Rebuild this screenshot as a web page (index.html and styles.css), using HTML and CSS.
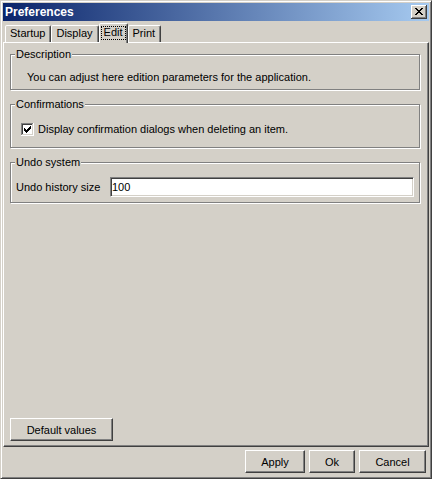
FILE: index.html
```html
<!DOCTYPE html>
<html>
<head>
<meta charset="utf-8">
<title>Preferences</title>
<link rel="stylesheet" href="styles.css">
</head>
<body>
<div class="window">
  <div class="titlebar">
    <span class="title">Preferences</span>
    <svg class="close" width="16" height="14" viewBox="0 0 16 14" shape-rendering="crispEdges">
      <rect x="0" y="0" width="16" height="14" fill="#d4d0c8"/>
      <rect x="0" y="0" width="15" height="1" fill="#ffffff"/>
      <rect x="0" y="0" width="1" height="13" fill="#ffffff"/>
      <rect x="1" y="12" width="14" height="1" fill="#808080"/>
      <rect x="14" y="1" width="1" height="12" fill="#808080"/>
      <rect x="0" y="13" width="16" height="1" fill="#404040"/>
      <rect x="15" y="0" width="1" height="14" fill="#404040"/>
      <path fill="#000" d="M4 3h2v1h-2z M10 3h2v1h-2z M5 4h2v1h-2z M9 4h2v1h-2z M6 5h4v1h-4z M7 6h2v1h-2z M6 7h4v1h-4z M5 8h2v1h-2z M9 8h2v1h-2z M4 9h2v1h-2z M10 9h2v1h-2z"/>
    </svg>
  </div>
  <div class="tabs">
    <div class="tab">Startup</div>
    <div class="tab">Display</div>
    <div class="tab tab-active"><span class="focus">Edit</span></div>
    <div class="tab">Print</div>
  </div>
  <div class="panel">
    <div class="group">
      <div class="group-title">Description</div>
      <div class="group-box desc-box">You can adjust here edition parameters for the application.</div>
    </div>
    <div class="group">
      <div class="group-title">Confirmations</div>
      <div class="group-box conf-box">
        <svg class="checkbox" width="13" height="13" viewBox="0 0 13 13" shape-rendering="crispEdges">
          <rect x="0" y="0" width="13" height="13" fill="#ffffff"/>
          <rect x="0" y="0" width="12" height="1" fill="#808080"/>
          <rect x="0" y="0" width="1" height="12" fill="#808080"/>
          <rect x="1" y="1" width="10" height="1" fill="#404040"/>
          <rect x="1" y="1" width="1" height="10" fill="#404040"/>
          <rect x="1" y="11" width="11" height="1" fill="#d4d0c8"/>
          <rect x="11" y="1" width="1" height="11" fill="#d4d0c8"/>
          <path fill="#000" d="M3 5V8H4V9H5V10H6V9H7V8H8V7H9V6H10V3H9V4H8V5H7V6H6V7H5V6H4V5Z"/>
        </svg>
        <span class="check-label">Display confirmation dialogs when deleting an item.</span>
      </div>
    </div>
    <div class="group">
      <div class="group-title">Undo system</div>
      <div class="group-box undo-box">
        <span class="undo-label">Undo history size</span>
        <input class="field" type="text" value="100">
      </div>
    </div>
    <div class="spacer"></div>
    <button class="btn btn-default">Default values</button>
  </div>
  <div class="actions">
    <button class="btn btn-apply">Apply</button>
    <button class="btn btn-ok">Ok</button>
    <button class="btn btn-cancel">Cancel</button>
  </div>
</div>
</body>
</html>
```
FILE: styles.css
```css
html, body {
  margin: 0;
  padding: 0;
  background: #d4d0c8;
}

body {
  font-family: "Liberation Sans", Arial, sans-serif;
  font-size: 11px;
  color: #000;
}

.window {
  box-sizing: border-box;
  width: 432px;
  height: 479px;
  border: 1px solid;
  border-color: #d4d0c8 #404040 #404040 #d4d0c8;
  box-shadow: inset 1px 1px #fff, inset -1px -1px #808080;
  padding: 2px;
  display: flex;
  flex-direction: column;
  background: #d4d0c8;
}

.titlebar {
  flex: none;
  height: 18px;
  display: flex;
  align-items: center;
  justify-content: space-between;
  padding: 0 2px;
  background: linear-gradient(to right, #0a246a, #a6caf0);
}

.title {
  color: #fff;
  font-weight: bold;
  font-size: 12px;
  line-height: 18px;
}

.close {
  display: block;
}

.tabs {
  flex: none;
  height: 20px;
  display: flex;
  align-items: flex-end;
  padding: 2px 0 0 2px;
  margin-bottom: -1px;
}

.tab {
  box-sizing: border-box;
  height: 17px;
  margin-bottom: 1px;
  padding: 1px 5px 2px 4px;
  line-height: 13px;
  border: 1px solid;
  border-bottom: 0;
  border-color: #fff #404040 transparent #fff;
  box-shadow: inset -1px 0 #808080;
  border-radius: 2px 2px 0 0;
  background: #d4d0c8;
  white-space: nowrap;
}

.tab-active {
  height: 20px;
  margin-bottom: 0;
  padding: 2px 1px 3px 1px;
  position: relative;
  z-index: 1;
}

.focus {
  display: block;
  border: 1px dotted #000;
  padding: 0 2px 1px;
  line-height: 11px;
}

.panel {
  flex: 1;
  min-height: 0;
  display: flex;
  flex-direction: column;
  border: 1px solid;
  border-color: #fff #404040 #404040 #fff;
  box-shadow: inset -1px -1px #808080;
  padding: 5px 8px 5px 6px;
}

.group {
  display: flex;
  flex-direction: column;
  margin-bottom: 8px;
}

.group-title {
  align-self: flex-start;
  position: relative;
  margin: 0 0 -7px 5px;
  padding: 0 1px;
  line-height: 13px;
  background: #d4d0c8;
}

.group-box {
  border: 1px solid #808080;
  box-shadow: inset 1px 1px #fff, 1px 1px #fff;
}

.desc-box {
  padding: 16px 0 5px 16px;
  line-height: 13px;
}

.conf-box {
  display: flex;
  align-items: center;
  padding: 18px 0 11px 10px;
  line-height: 13px;
}

.checkbox {
  display: block;
  flex: none;
  margin-right: 4px;
}

.undo-box {
  display: flex;
  align-items: center;
  justify-content: space-between;
  padding: 14px 5px 5px 5px;
  line-height: 13px;
}

.field {
  box-sizing: border-box;
  width: 304px;
  height: 20px;
  margin: 0;
  padding: 0 1px;
  font-family: inherit;
  font-size: 11px;
  color: #000;
  background: #fff;
  border: 1px solid;
  border-color: #808080 #fff #fff #808080;
  box-shadow: inset 1px 1px #404040, inset -1px -1px #d4d0c8;
  outline: none;
  -webkit-appearance: none;
  appearance: none;
}

.spacer {
  flex: 1;
}

.btn {
  box-sizing: border-box;
  height: 23px;
  margin: 0;
  padding: 0;
  font-family: inherit;
  font-size: 11px;
  color: #000;
  background: #d4d0c8;
  border: 1px solid;
  border-color: #fff #404040 #404040 #fff;
  box-shadow: inset -1px -1px #808080;
  border-radius: 0;
}

.btn-default {
  align-self: flex-start;
  width: 103px;
}

.actions {
  flex: none;
  display: flex;
  justify-content: flex-end;
  gap: 4px;
  padding: 3px 3px 3px 0;
}

.btn-apply {
  width: 60px;
}

.btn-ok {
  width: 46px;
}

.btn-cancel {
  width: 67px;
}
```
